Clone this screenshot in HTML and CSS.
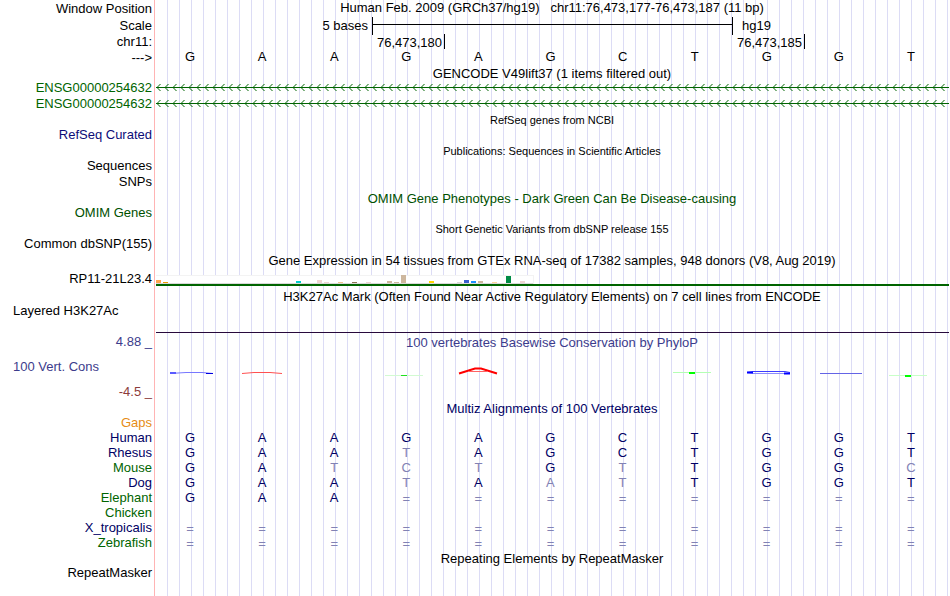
FILE: index.html
```html
<!DOCTYPE html>
<html lang="en">
<head>
  <meta charset="UTF-8" />
  <meta name="viewport" content="width=device-width, initial-scale=1.0"/>
  <title>Genome Browser hg19 chr11:76,473,177-76,473,187</title>
  <link rel="stylesheet" href="styles.css">
</head>
<body>

<main class="browser">

  <!-- Position and ruler -->
  <div class="row ruler">
    <div class="label">Window Position</div>
    <div class="center">Human Feb. 2009 (GRCh37/hg19) &nbsp; chr11:76,473,177-76,473,187 (11 bp)</div>
  </div>
  <div class="row">
    <div class="label low">Scale</div>
    <div class="scale">
      <span class="scale-size low">5 bases</span>
      <span class="scale-bar"></span>
      <span class="scale-db low">hg19</span>
    </div>
  </div>
  <div class="row ruler">
    <div class="label low">chr11:</div>
    <div class="ticks">
      <span class="tick tick-first">76,473,180</span>
      <span class="tick tick-second">76,473,185</span>
    </div>
  </div>
  <div class="row">
    <div class="label">---&gt;</div>
    <div class="bases">
      <span>G</span><span>A</span><span>A</span><span>G</span><span>A</span><span>G</span><span>C</span><span>T</span><span>G</span><span>G</span><span>T</span>
    </div>
  </div>

  <!-- GENCODE -->
  <div class="title">GENCODE V49lift37 (1 items filtered out)</div>
  <div class="row track">
    <div class="label gene">ENSG00000254632</div>
    <svg class="intron" width="100%" height="16">
      <defs>
        <pattern id="arrows" width="8" height="16" patternUnits="userSpaceOnUse">
          <path d="M4.5 3L1 6.5L4.5 10" fill="none" stroke="#006400"/>
        </pattern>
      </defs>
      <rect width="100%" height="16" fill="url(#arrows)"/>
      <rect y="6" width="100%" height="1" fill="#006400"/>
    </svg>
  </div>
  <div class="row track">
    <div class="label gene">ENSG00000254632</div>
    <svg class="intron" width="100%" height="16">
      <rect width="100%" height="16" fill="url(#arrows)"/>
      <rect y="6" width="100%" height="1" fill="#006400"/>
    </svg>
  </div>

  <!-- Dense tracks without items here -->
  <div class="title small">RefSeq genes from NCBI</div>
  <div class="row track"><div class="label refseq">RefSeq Curated</div></div>

  <div class="title small">Publications: Sequences in Scientific Articles</div>
  <div class="row track"><div class="label">Sequences</div></div>
  <div class="row track"><div class="label">SNPs</div></div>

  <div class="title omim">OMIM Gene Phenotypes - Dark Green Can Be Disease-causing</div>
  <div class="row track"><div class="label omim">OMIM Genes</div></div>

  <div class="title small">Short Genetic Variants from dbSNP release 155</div>
  <div class="row track"><div class="label">Common dbSNP(155)</div></div>

  <!-- GTEx -->
  <div class="title">Gene Expression in 54 tissues from GTEx RNA-seq of 17382 samples, 948 donors (V8, Aug 2019)</div>
  <div class="row gtex">
    <div class="label">RP11-21L23.4</div>
    <svg class="expression" width="100%" height="21" shape-rendering="crispEdges">
      <rect width="378" height="10" y="7" fill="#f3f3f3"/>
      <rect width="377" height="7" y="8" fill="#fff"/>
      <rect width="377" height="1" y="15" fill="#d9d9d9"/>
      <rect x="0" y="12" width="5" height="3" fill="#ffa54f"/>
      <rect x="7" y="14" width="5" height="1" fill="#ee9a00"/>
      <rect x="140" y="13" width="5" height="2" fill="#00cdcd"/>
      <rect x="161" y="12" width="5" height="3" fill="#eed5d2"/>
      <rect x="168" y="14" width="5" height="1" fill="#eed5d2"/>
      <rect x="182" y="14" width="5" height="1" fill="#eec591"/>
      <rect x="196" y="14" width="5" height="1" fill="#8b7355"/>
      <rect x="210" y="14" width="5" height="1" fill="#eed5d2"/>
      <rect x="231" y="13" width="5" height="2" fill="#cdb79e"/>
      <rect x="238" y="14" width="5" height="1" fill="#cdb79e"/>
      <rect x="245" y="7" width="5" height="8" fill="#cdb79e"/>
      <rect x="273" y="13" width="5" height="2" fill="#ffd700"/>
      <rect x="301" y="14" width="5" height="1" fill="#d9d9d9"/>
      <rect x="308" y="12" width="5" height="3" fill="#3a5fcd"/>
      <rect x="315" y="13" width="5" height="2" fill="#1e90ff"/>
      <rect x="322" y="13" width="5" height="2" fill="#cdb79e"/>
      <rect x="336" y="14" width="5" height="1" fill="#ffd39b"/>
      <rect x="350" y="8" width="5" height="7" fill="#008b45"/>
      <rect x="364" y="13" width="5" height="2" fill="#eed5d2"/>
      <rect y="16" width="100%" height="2" fill="#006400"/>
    </svg>
  </div>

  <!-- H3K27Ac -->
  <div class="title">H3K27Ac Mark (Often Found Near Active Regulatory Elements) on 7 cell lines from ENCODE</div>
  <div class="row track h3k27ac">
    <div class="label wide">Layered H3K27Ac</div>
    <div class="baseline"></div>
  </div>

  <!-- Conservation -->
  <div class="row phylop">
    <div class="label limit">4.88 _</div>
    <div class="center low">100 vertebrates Basewise Conservation by PhyloP</div>
  </div>
  <div class="row cons">
    <div class="cons-labels">
      <div class="label wide phylop">100 Vert. Cons</div>
      <div class="label limit negative">-4.5 _</div>
    </div>
    <svg class="wiggle" width="793" height="50" fill="none">
      <path d="M14 23.5L30 22.5H46L57 23.5" stroke="#7878ff"/>
      <path d="M14 23H20" stroke="#5a5aff" stroke-width="2"/>
      <path d="M50 23.5H57" stroke="#0000e0"/>
      <path d="M86 23.5L98 22.5H114L126 23.5" stroke="#ff5050"/>
      <path d="M229 25.5H267" stroke="#d2fad2"/>
      <path d="M245 25.5H251" stroke="#20e020"/>
      <path d="M303 23.5L319 18.5H325L341 23.5" stroke="#f00" stroke-width="2"/>
      <path d="M312 21.5H332" stroke="#ff6464"/>
      <path d="M517 22.5H555" stroke="#b4ffb4"/>
      <path d="M533 23H539" stroke="#0f0" stroke-width="2"/>
      <path d="M591 22.5L597 21.5H629L634 22.5" stroke="#3c3cff"/>
      <path d="M591 22.5L597 23.5H629" stroke="#8c8cff"/>
      <path d="M591 22.5H597M628 23.5H634" stroke="#00f" stroke-width="2"/>
      <path d="M664 23.5H706" stroke="#6464e6"/>
      <path d="M733 25.5H771" stroke="#c8ffc8"/>
      <path d="M749 26H755" stroke="#0f0" stroke-width="2"/>
    </svg>
  </div>

  <!-- Multiz -->
  <div class="title multiz low">Multiz Alignments of 100 Vertebrates</div>
  <table class="alignment">
    <tr class="gaps"><th>Gaps</th><td></td><td></td><td></td><td></td><td></td><td></td><td></td><td></td><td></td><td></td><td></td></tr>
    <tr><th>Human</th><td>G</td><td>A</td><td>A</td><td>G</td><td>A</td><td>G</td><td>C</td><td>T</td><td>G</td><td>G</td><td>T</td></tr>
    <tr><th>Rhesus</th><td>G</td><td>A</td><td>A</td><td class="diff">T</td><td>A</td><td>G</td><td>C</td><td>T</td><td>G</td><td>G</td><td>T</td></tr>
    <tr class="alt"><th>Mouse</th><td>G</td><td>A</td><td class="diff">T</td><td class="diff">C</td><td class="diff">T</td><td>G</td><td class="diff">T</td><td>T</td><td>G</td><td>G</td><td class="diff">C</td></tr>
    <tr><th>Dog</th><td>G</td><td>A</td><td>A</td><td class="diff">T</td><td>A</td><td class="diff">A</td><td class="diff">T</td><td>T</td><td>G</td><td>G</td><td>T</td></tr>
    <tr class="alt"><th>Elephant</th><td>G</td><td>A</td><td>A</td><td class="none">=</td><td class="none">=</td><td class="none">=</td><td class="none">=</td><td class="none">=</td><td class="none">=</td><td class="none">=</td><td class="none">=</td></tr>
    <tr class="alt"><th>Chicken</th><td></td><td></td><td></td><td></td><td></td><td></td><td></td><td></td><td></td><td></td><td></td></tr>
    <tr><th>X_tropicalis</th><td class="none">=</td><td class="none">=</td><td class="none">=</td><td class="none">=</td><td class="none">=</td><td class="none">=</td><td class="none">=</td><td class="none">=</td><td class="none">=</td><td class="none">=</td><td class="none">=</td></tr>
    <tr class="alt"><th>Zebrafish</th><td class="none">=</td><td class="none">=</td><td class="none">=</td><td class="none">=</td><td class="none">=</td><td class="none">=</td><td class="none">=</td><td class="none">=</td><td class="none">=</td><td class="none">=</td><td class="none">=</td></tr>
  </table>

  <!-- RepeatMasker -->
  <div class="title low">Repeating Elements by RepeatMasker</div>
  <div class="row"><div class="label">RepeatMasker</div></div>

</main>

</body>
</html>
```

FILE: styles.css
```css
:root {
  --label-width: 154px;
  --guide: #dcdcf5;
  --edge: #ffb4b4;
  --gene: #006400;
  --navy: #000064;
}

* {
  box-sizing: border-box;
}

body {
  margin: 0;
  background: #fff;
  color: #000;
  font-family: "Liberation Sans", Arial, sans-serif;
  font-size: 13px;
}

/* red edge after the labels, then a guide line every 12px */
.browser {
  min-height: 100vh;
  background:
    linear-gradient(var(--edge), var(--edge)) var(--label-width) 0 / 1px 100% no-repeat,
    linear-gradient(#fff, #fff) 0 0 / 166px 100% no-repeat,
    repeating-linear-gradient(to right, transparent 0 11px, var(--guide) 11px 12px);
}

.row {
  display: grid;
  grid-template-columns: var(--label-width) minmax(0, 1fr);
  height: 16px;
  line-height: 16px;
}

.ruler {
  height: 17px;
  line-height: 17px;
}

.track {
  line-height: 14px;
}

.label {
  padding-right: 2px;
  text-align: right;
  white-space: nowrap;
}

.label.wide {
  padding-left: 13px;
  text-align: left;
}

.center {
  text-align: center;
  line-height: 16px;
}

.title {
  height: 15px;
  margin-left: var(--label-width);
  line-height: 15px;
  text-align: center;
  white-space: nowrap;
}

.low {
  line-height: 18px;
}

.small {
  font-size: 11px;
}

.gene {
  color: var(--gene);
}

.refseq {
  color: #0c0c78;
}

.omim {
  color: #005000;
}

.multiz {
  color: var(--navy);
}

/* Ruler */
.scale {
  display: flex;
  padding-right: 180px;
}

.scale-size {
  width: 218px;
  padding-right: 4px;
  text-align: right;
}

.scale-bar {
  flex: 1;
  border: solid #000;
  border-width: 0 1px;
  background: linear-gradient(#000, #000) 0 7px / 100% 1px no-repeat;
}

.scale-db {
  width: 37px;
  padding-left: 9px;
}

.ticks {
  display: flex;
}

.tick {
  height: 15px;
  margin-top: 1px;
  padding-right: 2px;
  border-right: 1px solid #000;
  text-align: right;
}

.tick-first {
  width: 291px;
}

.tick-second {
  width: 360px;
}

.bases {
  display: grid;
  grid-template-columns: repeat(11, 1fr);
  padding-right: 3px;
  line-height: 14px;
  text-align: center;
}

/* Tracks */
.intron,
.expression {
  display: block;
  padding: 0 1px 0 2px;
}

.gtex {
  height: 21px;
  line-height: 21px;
}

.h3k27ac {
  height: 30px;
}

.baseline {
  height: 29px;
  margin: 0 1px 0 2px;
  border-bottom: 1px solid #280a3c;
}

.phylop {
  color: #3c3c8c;
}

.cons {
  height: 50px;
}

.cons-labels {
  display: flex;
  flex-direction: column;
  justify-content: space-between;
  padding-top: 9px;
}

.negative {
  color: #8c3c3c;
}

.wiggle {
  display: block;
  margin-left: 2px;
}

/* Alignment */
.alignment {
  width: calc(100% - 3px);
  table-layout: fixed;
  border-collapse: collapse;
  color: var(--navy);
  line-height: 15px;
}

.alignment th {
  width: var(--label-width);
  padding: 0 2px 0 0;
  font-weight: normal;
  text-align: right;
}

.alignment td {
  height: 15px;
  padding: 0;
  text-align: center;
}

.alignment .gaps th {
  color: #e68c14;
}

.alignment .alt th {
  color: var(--gene);
}

.alignment .diff,
.alignment .none {
  color: #8282b4;
}

.alignment .none {
  padding-top: 2px;
  line-height: 13px;
}
```
